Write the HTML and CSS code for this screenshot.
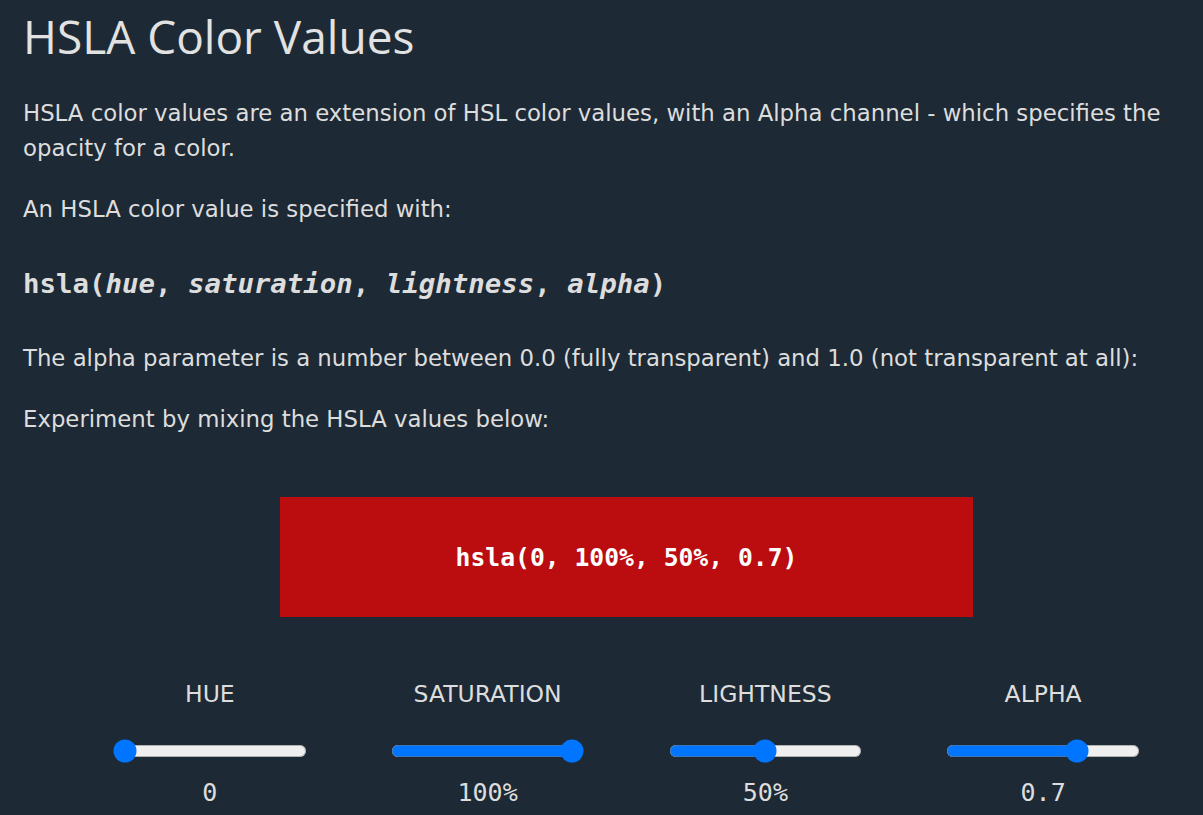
FILE: index.html
```html
<!DOCTYPE html>
<html lang="en">
<head>
<meta charset="utf-8">
<title>HSLA Color Values</title>
<link rel="stylesheet" href="styles.css">
</head>
<body>
<div class="page">
  <h1 class="title">HSLA Color Values</h1>
  <p class="text">HSLA color values are an extension of HSL color values, with an Alpha channel - which specifies the opacity for a color.</p>
  <p class="text">An HSLA color value is specified with:</p>
  <p class="code">hsla(<i>hue</i>, <i>saturation</i>, <i>lightness</i>, <i>alpha</i>)</p>
  <p class="text">The alpha parameter is a number between 0.0 (fully transparent) and 1.0 (not transparent at all):</p>
  <p class="text">Experiment by mixing the HSLA values below:</p>
  <div class="demo">
    <div class="swatch">hsla(0, 100%, 50%, 0.7)</div>
    <div class="controls">
      <div class="ctl">
        <div class="lbl">HUE</div>
        <input class="range" type="range" min="0" max="360" value="0">
        <div class="val">0</div>
      </div>
      <div class="ctl">
        <div class="lbl">SATURATION</div>
        <input class="range" type="range" min="0" max="100" value="100">
        <div class="val">100%</div>
      </div>
      <div class="ctl">
        <div class="lbl">LIGHTNESS</div>
        <input class="range" type="range" min="0" max="100" value="50">
        <div class="val">50%</div>
      </div>
      <div class="ctl">
        <div class="lbl">ALPHA</div>
        <input class="range" type="range" min="0" max="1" step="0.1" value="0.7">
        <div class="val">0.7</div>
      </div>
    </div>
  </div>
</div>
</body>
</html>
```

FILE: styles.css
```css
html, body {
  margin: 0;
  padding: 0;
  background: #1d2a35;
}
body {
  color: #dddddd;
  font-family: "DejaVu Sans", Verdana, sans-serif;
  overflow: hidden;
}
.page {
  padding: 0 23px;
}
.title {
  font-family: "Open Sans", "Noto Sans", sans-serif;
  font-weight: 400;
  font-size: 46px;
  line-height: 56px;
  margin: 8px 0 0;
  color: #e2e2e2;
}
.text {
  font-size: 22.8px;
  line-height: 35px;
  margin: 0 0 26px;
}
.title + .text {
  margin-top: 32px;
}
.code {
  font-family: "DejaVu Sans Mono", "Liberation Mono", monospace;
  font-weight: bold;
  font-size: 27.4px;
  line-height: 40px;
  margin: 37px 0 37px;
}
.code i {
  font-style: italic;
}
.demo {
  margin: 60px 0 0 48px;
  width: 1111px;
}
.swatch {
  width: 693px;
  height: 120px;
  margin: 0 auto;
  background: hsla(0, 100%, 50%, 0.7);
  color: #ffffff;
  font-family: "DejaVu Sans Mono", "Liberation Mono", monospace;
  font-weight: bold;
  font-size: 24.7px;
  display: flex;
  align-items: center;
  justify-content: center;
}
.controls {
  display: grid;
  grid-template-columns: repeat(4, 1fr);
  margin-top: 62px;
}
.ctl {
  display: flex;
  flex-direction: column;
  align-items: center;
}
.lbl {
  font-size: 23.5px;
  line-height: 30px;
}
.range {
  zoom: 1.5;
  margin: 20px 2px 10px;
}
.val {
  font-family: "DejaVu Sans Mono", "Liberation Mono", monospace;
  font-size: 25px;
  line-height: 30px;
}
```
